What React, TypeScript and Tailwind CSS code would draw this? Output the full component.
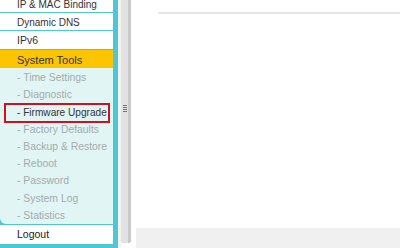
import { useState } from 'react';

const subItems = [
  'Time Settings',
  'Diagnostic',
  'Firmware Upgrade',
  'Factory Defaults',
  'Backup & Restore',
  'Reboot',
  'Password',
  'System Log',
  'Statistics',
];

export default function App() {
  const [active] = useState('Firmware Upgrade');

  return (
    <div
      className="flex w-[400px] h-[248px] overflow-hidden bg-white text-[10.5px] whitespace-nowrap"
      style={{ fontFamily: '"Liberation Sans", Arial, sans-serif' }}
    >
      {/* sidebar */}
      <div className="w-[118px] shrink-0 bg-[#4fc6d3] pr-[5px] flex flex-col">
        <div className="-mt-[5px] flex flex-col">
          <div className="h-[17.5px] bg-white border-b border-[#4fc6d3] pl-[17px] pt-[3px] flex items-center text-[#333] text-[10px]">IP &amp; MAC Binding</div>
          <div className="h-[18.5px] bg-white border-b border-[#4fc6d3] pl-[17px] pt-[3px] flex items-center text-[#333] text-[10px]">Dynamic DNS</div>
          <div className="h-[18.5px] bg-white border-b border-[#4fc6d3] pl-[17px] pt-[3px] flex items-center text-[#333]">IPv6</div>
          <div className="h-[18px] bg-[#fdc400] pl-[17px] pt-[3px] flex items-center text-[#333] text-[11px]">System Tools</div>
          <div className="bg-[#e2f5f5] rounded-bl-[6px] pb-[1px]">
            {subItems.map((item) => (
              <div
                key={item}
                className={
                  'relative h-[17.25px] pl-[17px] pt-[3px] flex items-center ' +
                  (item === active ? 'text-[#333] text-[10.1px]' : 'text-[#a3abab] text-[10.4px]')
                }
              >
                - {item}
                {item === active && (
                  <div className="absolute left-[4px] top-[1px] w-[106px] h-[20px] border-2 border-[#d0101e]" />
                )}
              </div>
            ))}
          </div>
          <div className="mt-[1px] h-[19px] bg-white pl-[17px] pt-[2px] flex items-center text-[#222]">Logout</div>
        </div>
      </div>

      {/* splitter */}
      <div className="w-[3px] shrink-0 bg-[#f2f4f4]" />
      <div className="w-[10px] shrink-0 h-[243px] flex rounded-b-[2px] overflow-hidden relative">
        <div className="w-[7px] bg-[#e2e2e2]" />
        <div className="w-[3px] bg-[#c9c9c9]" />
        <div className="absolute left-[2px] top-[105px] flex flex-col gap-[1px]">
          <div className="w-[4px] h-[1px] bg-[#777]" />
          <div className="w-[4px] h-[1px] bg-[#777]" />
          <div className="w-[4px] h-[1px] bg-[#777]" />
          <div className="w-[4px] h-[1px] bg-[#777]" />
        </div>
      </div>

      {/* main */}
      <div className="flex-1 flex flex-col">
        <div className="pt-[12px] pl-[27px]">
          <div className="h-[2px] bg-[#e6e6e6]" />
        </div>
        <div className="flex-1" />
        <div className="ml-[5px] h-[20px] bg-[#f0f0f0]" />
      </div>
    </div>
  );
}
